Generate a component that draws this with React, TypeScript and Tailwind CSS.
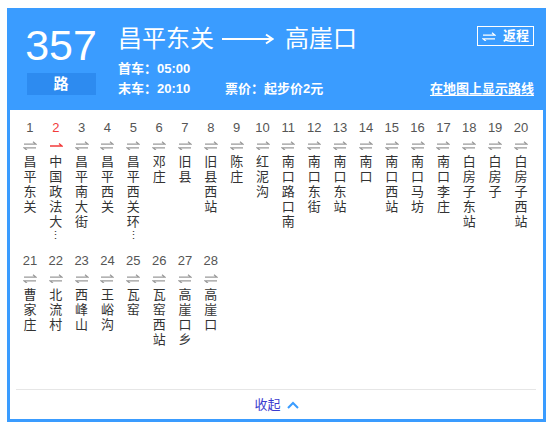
const BLUE = "#3a9cff";

const stops: string[] = [
  "昌平东关",
  "中国政法大学",
  "昌平南大街",
  "昌平西关",
  "昌平西关环岛",
  "邓庄",
  "旧县",
  "旧县西站",
  "陈庄",
  "红泥沟",
  "南口路口南",
  "南口东街",
  "南口东站",
  "南口",
  "南口西站",
  "南口马坊",
  "南口李庄",
  "白房子东站",
  "白房子",
  "白房子西站",
  "曹家庄",
  "北流村",
  "西峰山",
  "王峪沟",
  "瓦窑",
  "瓦窑西站",
  "高崖口乡",
  "高崖口",
];

// Current stop index (0-based), shown in red with a one-way arrow
const CURRENT = 1;
const MAX_CHARS = 5;

function TwoWay({ color = "#9a9a9a" }: { color?: string }) {
  return (
    <svg width="14" height="9" viewBox="0 0 14 9" fill="none" stroke={color} strokeWidth="1.2">
      <path d="M1 3.2H13L10 0.8" />
      <path d="M13 6.8H1L4 9.2" />
    </svg>
  );
}

function OneWay() {
  return (
    <svg width="14" height="9" viewBox="0 0 14 9" fill="none" stroke="#f23b3b" strokeWidth="1.3">
      <path d="M1 5H13L10 2.6" />
    </svg>
  );
}

function StopName({ name }: { name: string }) {
  const chars = Array.from(name);
  const shown = chars.length > MAX_CHARS ? chars.slice(0, MAX_CHARS) : chars;
  return (
    <div className="mt-[4px] flex flex-col items-center text-[13px] leading-[15px] text-[#333]">
      {shown.map((c, i) => (
        <span key={i}>{c}</span>
      ))}
      {chars.length > MAX_CHARS ? <span className="text-[11px] leading-[12px]">⋮</span> : null}
    </div>
  );
}

export default function App() {
  return (
    <div
      className="min-h-[427px] bg-white pl-[7px] pt-[8px]"
      style={{ fontFamily: '"Liberation Sans", "Noto Sans CJK SC", sans-serif' }}
    >
      <div className="w-[539px] border-[3px] border-[#3a9cff] bg-white">
        {/* Route header */}
        <div className="flex h-[99px] bg-[#3a9cff] pl-[15px] pr-[9px] text-white">
          <div className="flex w-[72px] flex-col items-center">
            <div className="mt-[12px] text-[43px] leading-[44px]">357</div>
            <div className="mt-[6px] flex h-[22px] w-[69px] items-center justify-center bg-[#2d8bf0] text-[15px] font-bold">
              路
            </div>
          </div>

          <div className="ml-[21px] flex flex-1 flex-col">
            <div className="flex items-start justify-between">
              <div className="flex items-center pt-[16px] text-[24px] leading-[24px]">
                <span>昌平东关</span>
                <svg className="ml-[8px] mr-[11px]" width="52" height="14" viewBox="0 0 52 14" fill="none" stroke="white">
                  <path d="M0 7H50" strokeWidth="2" />
                  <path d="M44 2.5L50.5 7L44 11.5" strokeWidth="2" />
                </svg>
                <span>高崖口</span>
              </div>
              <div className="mt-[15px] flex h-[20px] w-[57px] items-center justify-center gap-[7px] border border-white text-[13px] font-bold">
                <TwoWay color="white" />
                <span>返程</span>
              </div>
            </div>
            <div className="mt-[8px] text-[13px] font-bold leading-[20px]">首车：05:00</div>
            <div className="flex text-[13px] font-bold leading-[20px]">
              <span className="w-[107px]">末车：20:10</span>
              <span className="flex-1">票价：起步价2元</span>
              <span className="underline underline-offset-2">在地图上显示路线</span>
            </div>
          </div>
        </div>

        {/* Stop list */}
        <div className="pl-[7px] pt-[10px]">
          <div className="grid auto-rows-[133px] grid-cols-[repeat(20,25.85px)]">
            {stops.map((name, i) => (
              <div key={i} className="flex flex-col items-center">
                <div
                  className={
                    i === CURRENT
                      ? "text-[13px] leading-[16px] text-[#f23b3b]"
                      : "text-[13px] leading-[16px] text-[#555]"
                  }
                >
                  {i + 1}
                </div>
                <div className="mt-[5px] flex h-[9px] items-center">
                  {i === CURRENT ? <OneWay /> : <TwoWay />}
                </div>
                <StopName name={name} />
              </div>
            ))}
          </div>
        </div>

        <div className="ml-[6px] mr-[7px] mt-[3px] border-t border-[#e6e6e6]" />
        <div className="flex h-[29px] items-center justify-center gap-[6px]">
          <span className="text-[13px] text-[#3c3ccf]">收起</span>
          <svg width="12" height="8" viewBox="0 0 12 8" fill="none" stroke={BLUE} strokeWidth="2">
            <path d="M1 7L6 2L11 7" />
          </svg>
        </div>
      </div>
    </div>
  );
}
